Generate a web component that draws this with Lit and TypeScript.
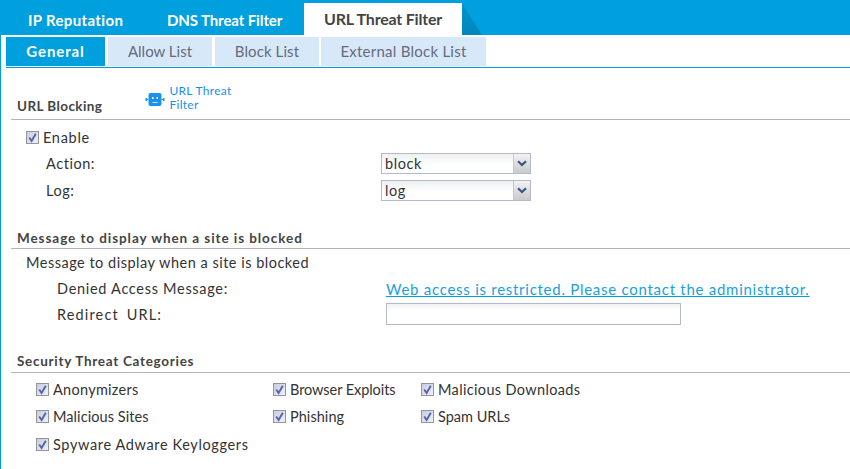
import { LitElement, html, css, svg } from "lit";
import { customElement } from "lit/decorators.js";

const CHECK = svg`<path d="M3.2 6.5 L5.6 10 L9.8 2.8" fill="none" stroke="#5564a8" stroke-width="1.9"/>`;

const CATS: [string, number][] = [
  ["Anonymizers", 0.28],
  ["Browser Exploits", -0.07],
  ["Malicious Downloads", 0.35],
  ["Malicious Sites", 0.08],
  ["Phishing", 0.05],
  ["Spam URLs", 0],
  ["Spyware Adware Keyloggers", 0.63],
];

@customElement("app-root")
export class AppRoot extends LitElement {
  static styles = css`
    :host { display: block; width: 850px; height: 469px; overflow: hidden; background: #fff;
      font-family: "Lato", "Liberation Sans", sans-serif; font-size: 14.5px; color: #333; letter-spacing: .55px; }
    .page { height: 469px; box-sizing: border-box; border-left: 1px solid #00a0df; }
    .tabs { display: flex; height: 35px; background: #00a0df; margin-left: -1px; align-items: flex-end; }
    .tab { box-sizing: border-box; height: 32px; display: flex; align-items: center; color: #fff; font-weight: 700; font-size: 15px; padding-top: 2px; }
    .tab.ip { width: 152px; padding-left: 28px; letter-spacing: .35px; }
    .tab.dns { width: 152px; padding-left: 15px; letter-spacing: -.1px; }
    .tab.url { width: 158px; background: #fff; color: #444; justify-content: center; font-size: 16px; padding: 0 0 2px; letter-spacing: -.2px; }
    .fold { width: 20px; height: 32px; background: linear-gradient(#0094cd, #0087bb); clip-path: polygon(0 0, 100% 100%, 0 100%); }
    .subtabs { display: flex; margin: 2px 0 0 5px; height: 30px; border-bottom: 1px solid #00a0df; gap: 3px; }
    .sub { box-sizing: border-box; height: 29px; display: flex; align-items: center; justify-content: center; background: #d7e9f8; color: #666a7d; font-size: 15px; padding-bottom: 2px; }
    .sub.on { background: #00a0df; color: #fff; font-weight: 700; width: 99px; letter-spacing: .9px; }
    .allow { width: 104px; letter-spacing: 0; }
    .block { width: 104px; letter-spacing: .1px; }
    .ext { width: 165px; margin-left: -1px; letter-spacing: .25px; }
    .head { display: flex; margin-left: 10px; border-bottom: 1px solid #b4b4b4; align-items: flex-end; padding-left: 6px; box-sizing: border-box; font-weight: 700; font-size: 13.5px; color: #444; }
    .h1 { height: 52px; padding-bottom: 5px; margin-bottom: 7px; letter-spacing: .42px; }
    .h2 { height: 26px; margin-top: 19px; padding-bottom: 2px; letter-spacing: .93px; }
    .h3 { height: 26px; margin-top: 20px; padding-bottom: 3px; margin-bottom: 3px; letter-spacing: .71px; }
    .help { display: flex; gap: 4px; margin-left: 43px; align-items: center; font-weight: 400; font-size: 12px; line-height: 14px; color: #1a8fe8; letter-spacing: .3px; width: 90px; position: relative; top: -2px; }
    .help svg { flex: none; margin-top: 4px; }
    .row { display: flex; align-items: center; height: 27px; }
    .enable { padding-left: 25px; height: 21px; margin-bottom: 2px; letter-spacing: .7px; }
    .field { padding-left: 45px; }
    .field .lbl { width: 335px; }
    .sel { box-sizing: border-box; width: 150px; height: 21px; border: 1px solid #b6b8cc; display: flex; background: linear-gradient(#eef1f1, #fff 60%); }
    .sel .val { flex: 1; padding-left: 3px; line-height: 19px; }
    .sel .btn { width: 16px; border-left: 1px solid #c4c6d4; background: linear-gradient(#f3f3f3, #c9c9c9); display: flex; align-items: center; justify-content: center; }
    .cb { display: block; width: 13px; height: 13px; flex: none; }
    .ck { display: flex; align-items: center; gap: 4px; }
    .msg { padding-left: 25px; height: 26px; margin-bottom: 1px; letter-spacing: .5px; }
    .deny { padding-left: 56px; height: 25.5px; }
    .deny .lbl { width: 329px; }
    .denied { letter-spacing: .7px; }
    .redirect { letter-spacing: 1.15px; word-spacing: 3px; }
    .link { color: #1a9fe0; text-decoration: underline; font-size: 15px; letter-spacing: .73px; text-decoration-color: #00a0df; }
    .input { box-sizing: border-box; width: 295px; height: 22px; border: 1px solid #b6b8cc; background: linear-gradient(#f0f2f2, #fff 35%); }
    .cats { display: grid; grid-template-columns: 237px 148px auto; grid-auto-rows: 27.25px; padding-left: 35px; align-items: center; }
  `;

  private cb() {
    return html`<svg class="cb" viewBox="0 0 13 13" width="13" height="13">
      <defs><linearGradient id="g" x1="0" y1="0" x2="1" y2="1"><stop offset="0" stop-color="#c6cade"/><stop offset="1" stop-color="#f1f2f8"/></linearGradient></defs>
      <rect x=".5" y=".5" width="12" height="12" fill="url(#g)" stroke="#959595"/>
      ${CHECK}
    </svg>`;
  }

  private select(v: string) {
    return html`<div class="sel"><div class="val">${v}</div><div class="btn">
      <svg width="10" height="7" viewBox="0 0 10 7"><path d="M1 1.2 L5 5 L9 1.2" fill="none" stroke="#3a5488" stroke-width="2.2"/></svg>
    </div></div>`;
  }

  render() {
    return html`<div class="page">
      <div class="tabs">
        <div class="tab ip">IP Reputation</div>
        <div class="tab dns">DNS Threat Filter</div>
        <div class="tab url">URL Threat Filter</div>
        <div class="fold"></div>
      </div>
      <div class="subtabs">
        <div class="sub on">General</div>
        <div class="sub allow">Allow List</div>
        <div class="sub block">Block List</div>
        <div class="sub ext">External Block List</div>
      </div>
      <div class="head h1">
        <span>URL Blocking</span>
        <div class="help">
          <svg width="20" height="16" viewBox="0 0 20 16">
            <rect x="3.5" y="1" width="13" height="13" rx="2" fill="#1a92f0"/>
            <rect x="0.5" y="6" width="1.5" height="3" fill="#1a92f0"/><rect x="18" y="6" width="1.5" height="3" fill="#1a92f0"/>
            <rect x="2" y="7" width="1.5" height="1" fill="#1a92f0"/><rect x="16.5" y="7" width="1.5" height="1" fill="#1a92f0"/>
            <rect x="7" y="5" width="1.5" height="2" fill="#fff"/><rect x="11.5" y="5" width="1.5" height="2" fill="#fff"/>
            <rect x="7.5" y="10" width="5" height="1" fill="#cfe6fb"/>
          </svg>
          <span>URL Threat Filter</span>
        </div>
      </div>
      <div class="row enable"><div class="ck">${this.cb()}<span>Enable</span></div></div>
      <div class="row field"><span class="lbl">Action:</span>${this.select("block")}</div>
      <div class="row field"><span class="lbl">Log:</span>${this.select("log")}</div>
      <div class="head h2"><span>Message to display when a site is blocked</span></div>
      <div class="row msg">Message to display when a site is blocked</div>
      <div class="row deny"><span class="lbl denied">Denied Access Message:</span><span class="link">Web access is restricted. Please contact the administrator.</span></div>
      <div class="row deny"><span class="lbl redirect">Redirect URL:</span><div class="input"></div></div>
      <div class="head h3"><span>Security Threat Categories</span></div>
      <div class="cats">
        ${CATS.map(([label, spacing]) => html`<div class="ck">${this.cb()}<span style="letter-spacing:${spacing}px">${label}</span></div>`)}
      </div>
    </div>`;
  }
}
